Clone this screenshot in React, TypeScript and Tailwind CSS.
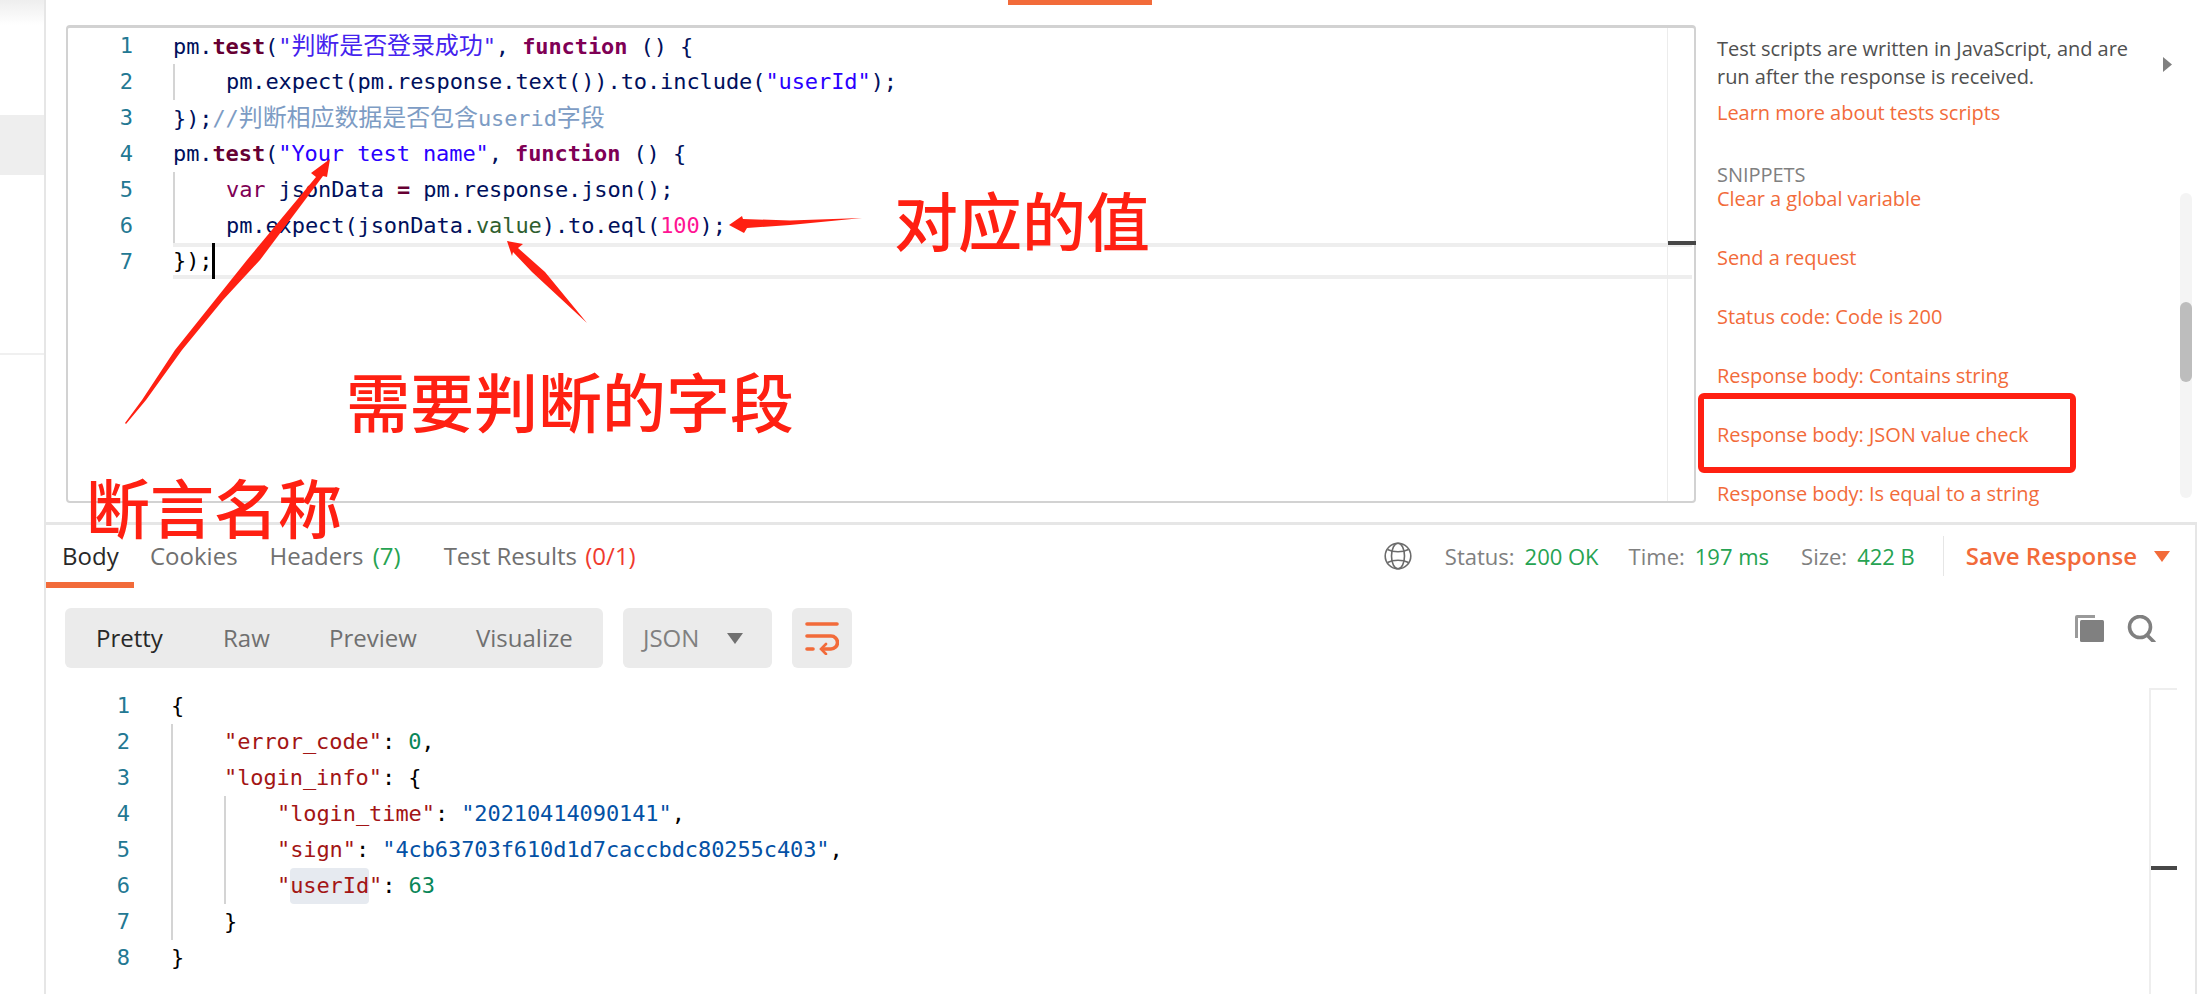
import type { ReactNode } from "react";

const UI_FONT = "font-['Open_Sans','Noto_Sans_CJK_SC',sans-serif]";
const CODE_FONT = "font-['DejaVu_Sans_Mono','Noto_Sans_CJK_SC',monospace] tracking-[-0.09px]";
const ANNOTATION =
  "absolute font-['Noto_Sans_CJK_SC',sans-serif] font-medium text-[64px] leading-[64px] text-[#ff2012] whitespace-nowrap";

function Cjk({ children, className = "" }: { children: ReactNode; className?: string }) {
  return <span className={`text-[24px] leading-[36px] ${className}`}>{children}</span>;
}

// one row of an editor: gutter number, indent guides, then the code
function CodeLine({
  n,
  levels = 0,
  gutter,
  children,
  active = false,
}: {
  n: number;
  levels?: number;
  gutter: string;
  children: ReactNode;
  active?: boolean;
}) {
  return (
    <div className="flex h-[36px]">
      <div className={`${gutter} shrink-0 text-right text-[#237893] leading-[36px]`}>{n}</div>
      {Array.from({ length: levels }).map((_, i) => (
        <div key={i} className="w-[53px] h-[36px] shrink-0 border-l-2 border-[#d4d4d4]" />
      ))}
      {active ? (
        <div className="w-[1519px] h-[36px] -mt-px border-y-4 border-[#eeeeee] leading-[28px] flex shrink-0">
          {children}
        </div>
      ) : (
        <div className="leading-[36px] whitespace-pre text-[#00105c]">{children}</div>
      )}
    </div>
  );
}

function Snippet({ children }: { children: ReactNode }) {
  return <div className="h-[24px] mb-[35px] leading-[24px] text-[#f26b3a] whitespace-nowrap">{children}</div>;
}

function Annotations() {
  return (
    <>
      <svg className="absolute inset-0 pointer-events-none" width="2197" height="994" viewBox="0 0 2197 994">
        <polygon
          points="125,423 142,400 175,350 215,300 247,260 316,177 311,173 330,159 327,177 323,176 260,260 223,300 182,350 146,400 126,424"
          fill="#ff2012"
        />
        <polygon points="862,218 790,220.5 743,219 742,216 729,225 744,233 747,228 790,225" fill="#ff2012" />
        <polygon points="587,323 545,272 518,248 523,244 507,241 512,256 513,252 532,272" fill="#ff2012" />
      </svg>
      <div className={`${ANNOTATION} left-[894px] top-[186px]`}>对应的值</div>
      <div className={`${ANNOTATION} left-[346px] top-[367px]`}>需要判断的字段</div>
      <div className={`${ANNOTATION} left-[86px] top-[473px]`}>断言名称</div>
      <div className="absolute left-[1698px] top-[393px] w-[378px] h-[80px] border-[6px] border-[#ff2012] rounded-[6px]" />
    </>
  );
}

export default function App() {
  const topGutter = "w-[105px] pr-[40px]";
  const jsonGutter = "w-[125px] pr-[41px]";
  return (
    <div className={`relative flex w-[2197px] h-[994px] overflow-hidden bg-white ${UI_FONT}`}>
      {/* Left sidebar */}
      <div className="w-[46px] shrink-0 border-r-2 border-[#e6e6e6]">
        <div className="h-[25px] bg-gradient-to-b from-[#eeeeee] to-white" />
        <div className="h-[60px] mt-[90px] bg-[#eeeeee]" />
        <div className="h-[2px] mt-[178px] bg-[#f0f0f0]" />
      </div>

      <div className="flex-1 min-w-0 flex flex-col">
        {/* Tests pane */}
        <div className="h-[522px] shrink-0">
          <div className="h-[5px] w-[144px] ml-[962px] bg-[#f26b3a]" />
          <div className="flex mt-[20px]">
            <div
              className={`ml-[20px] w-[1630px] h-[478px] shrink-0 flex border-2 border-t-[3px] border-[#d2d2d2] border-b-[2px] rounded-[4px] text-[22px] ${CODE_FONT}`}
            >
              <div className="w-[1599px] shrink-0">
                <CodeLine n={1} gutter={topGutter}>
                  pm.<b className="text-[#660033]">test</b>(<span className="text-[#4422ee]">"<Cjk>判断是否登录成功</Cjk>"</span>, <b className="text-[#7f0055]">function</b> () {"{"}
                </CodeLine>
                <CodeLine n={2} levels={1} gutter={topGutter}>
                  pm.expect(pm.response.text()).to.include(<span className="text-[#2a00ff]">"userId"</span>);
                </CodeLine>
                <CodeLine n={3} gutter={topGutter}>
                  {"});"}
                  <span className="text-[#7d9cc4]">
                    //<Cjk>判断相应数据是否包含</Cjk>userid<Cjk>字段</Cjk>
                  </span>
                </CodeLine>
                <CodeLine n={4} gutter={topGutter}>
                  pm.<b className="text-[#660033]">test</b>(<span className="text-[#2a00ff]">"Your test name"</span>, <b className="text-[#7f0055]">function</b> () {"{"}
                </CodeLine>
                <CodeLine n={5} levels={1} gutter={topGutter}>
                  <span className="text-[#7f0055]">var</span> jsonData <b className="text-[#660033]">=</b> pm.response.json();
                </CodeLine>
                <CodeLine n={6} levels={1} gutter={topGutter}>
                  pm.expect(jsonData.<span className="text-[#2f5f2f]">value</span>).to.eql(<span className="text-[#ff1493]">100</span>);
                </CodeLine>
                <CodeLine n={7} gutter={topGutter} active>
                  <span className="whitespace-pre text-black">{"});"}</span>
                  <span className="w-[3px] h-[36px] -mt-[4px] bg-black" />
                </CodeLine>
              </div>
              <div className="w-[29px] shrink-0 border-l border-[#ececec]">
                <div className="h-[4px] mt-[213px] bg-[#474747]" />
              </div>
            </div>

            {/* Snippets */}
            <div className="h-[483px] flex-1 min-w-0 flex overflow-hidden text-[20px] tracking-[-0.04px] pl-[21px]">
              <div className="w-[446px] shrink-0 pt-[10px]">
                <div className="w-[425px] leading-[28px] text-[#505050]">
                  Test scripts are written in JavaScript, and are run after the response is received.
                </div>
                <div className="mt-[8px] leading-[28px] text-[#f26b3a]">Learn more about tests scripts</div>
                <div className="mt-[36px] h-[24px] leading-[24px] text-[#808080]">SNIPPETS</div>
                <Snippet>Clear a global variable</Snippet>
                <Snippet>Send a request</Snippet>
                <Snippet>Status code: Code is 200</Snippet>
                <Snippet>Response body: Contains string</Snippet>
                <Snippet>Response body: JSON value check</Snippet>
                <Snippet>Response body: Is equal to a string</Snippet>
              </div>
              <svg className="mt-[32px] shrink-0" width="9" height="15" viewBox="0 0 9 15">
                <polygon points="0,0 9,7.5 0,15" fill="#808080" />
              </svg>
              <div className="ml-[8px] mt-[168px] w-[12px] h-[305px] shrink-0 rounded-full bg-[#f4f4f4] pt-[109px]">
                <div className="h-[80px] rounded-full bg-[#bdbdbd]" />
              </div>
            </div>
          </div>
        </div>

        {/* Response pane */}
        <div className="flex-1 min-h-0 flex flex-col border-t-[3px] border-r-2 border-[#e6e6e6]">
          <div className="flex h-[63px] shrink-0 text-[24px] text-[#707070]">
            <div className="w-[88px] h-[63px] border-b-[6px] border-[#f26b3a] pl-[16px] leading-[62px] text-[#282828]">Body</div>
            <div className="ml-[16px] leading-[62px]">Cookies</div>
            <div className="ml-[32px] leading-[62px]">
              Headers <span className="ml-[3px] text-[#26a352]">(7)</span>
            </div>
            <div className="ml-[43px] leading-[62px]">
              Test Results <span className="ml-[2px] text-[#f03a2e]">(0/1)</span>
            </div>
            <div className="ml-auto flex h-[62px] items-center text-[22px] pr-[25px]">
              <svg width="28" height="28" viewBox="0 0 28 28" fill="none" stroke="#6b6b6b" strokeWidth="1.6">
                <circle cx="14" cy="14" r="12.8" />
                <ellipse cx="14" cy="14" rx="6.5" ry="12.8" />
                <path d="M3.5 7.5c6 3 15 3 21 0M3.5 20.5c6-3 15-3 21 0" />
              </svg>
              <span className="ml-[33px] text-[#808080]">Status:</span>
              <span className="ml-[10px] text-[#26a352]">200 OK</span>
              <span className="ml-[30px] text-[#808080]">Time:</span>
              <span className="ml-[10px] text-[#26a352]">197 ms</span>
              <span className="ml-[32px] text-[#808080]">Size:</span>
              <span className="ml-[10px] text-[#26a352]">422 B</span>
              <div className="ml-[28px] w-px h-[40px] bg-[#e6e6e6]" />
              <span className="ml-[22px] text-[24px] font-semibold text-[#f26b3a]">Save Response</span>
              <svg className="ml-[17px]" width="16" height="11" viewBox="0 0 16 11">
                <polygon points="0,0 16,0 8,11" fill="#f26b3a" />
              </svg>
            </div>
          </div>

          <div className="flex mt-[20px] shrink-0 text-[24px] text-[#707070] pl-[19px] pr-[39px]">
            <div className="flex w-[538px] h-[60px] pl-[31px] rounded-[6px] bg-[#ebebeb] leading-[60px]">
              <div className="w-[127px] text-[#282828]">Pretty</div>
              <div className="w-[106px]">Raw</div>
              <div className="w-[147px]">Preview</div>
              <div>Visualize</div>
            </div>
            <div className="ml-[20px] flex items-center w-[149px] h-[60px] pl-[20px] rounded-[6px] bg-[#ebebeb] text-[#808080]">
              JSON
              <svg className="ml-[28px]" width="16" height="11" viewBox="0 0 16 11">
                <polygon points="0,0 16,0 8,11" fill="#707070" />
              </svg>
            </div>
            <div className="ml-[20px] flex items-center justify-center w-[60px] h-[60px] rounded-[6px] bg-[#ebebeb]">
              <svg width="34" height="34" viewBox="0 0 34 34" fill="none" stroke="#f26b3a" strokeWidth="3.6" strokeLinecap="round">
                <path d="M2 3h30" />
                <path d="M2 15h24a6 6 0 0 1 0 13h-8" />
                <path d="M2 28h6" />
                <path d="M21 23l-5 5 5 5" strokeWidth="2.6" />
              </svg>
            </div>
            <div className="ml-auto flex items-center gap-[23px] h-[60px] -mt-[10px]">
              <svg width="29" height="27" viewBox="0 0 29 27">
                <path d="M0 2a2 2 0 0 1 2-2h18v3H3v20H0z" fill="#9a9a9a" />
                <rect x="5" y="5" width="24" height="22" rx="1.5" fill="#808080" />
              </svg>
              <svg width="29" height="27" viewBox="0 0 29 27" fill="none" stroke="#808080" strokeWidth="3.6">
                <circle cx="13" cy="12" r="10.5" />
                <path d="M20 20l7 7" strokeLinecap="round" />
              </svg>
            </div>
          </div>

          <div className={`flex flex-1 min-h-0 mt-[20px] text-[22px] ${CODE_FONT}`}>
            <div className="flex-1 min-w-0">
              <CodeLine n={1} gutter={jsonGutter}>
                <span className="text-black">{"{"}</span>
              </CodeLine>
              <CodeLine n={2} levels={1} gutter={jsonGutter}>
                <span className="text-[#a31515]">"error_code"</span>
                <span className="text-black">: </span>
                <span className="text-[#098658]">0</span>
                <span className="text-black">,</span>
              </CodeLine>
              <CodeLine n={3} levels={1} gutter={jsonGutter}>
                <span className="text-[#a31515]">"login_info"</span>
                <span className="text-black">: {"{"}</span>
              </CodeLine>
              <CodeLine n={4} levels={2} gutter={jsonGutter}>
                <span className="text-[#a31515]">"login_time"</span>
                <span className="text-black">: </span>
                <span className="text-[#0451a5]">"20210414090141"</span>
                <span className="text-black">,</span>
              </CodeLine>
              <CodeLine n={5} levels={2} gutter={jsonGutter}>
                <span className="text-[#a31515]">"sign"</span>
                <span className="text-black">: </span>
                <span className="text-[#0451a5]">"4cb63703f610d1d7caccbdc80255c403"</span>
                <span className="text-black">,</span>
              </CodeLine>
              <CodeLine n={6} levels={2} gutter={jsonGutter}>
                <span className="text-[#a31515]">
                  "<span className="inline-block h-[36px] rounded-[4px] bg-[#e6eaf0]">userId</span>"
                </span>
                <span className="text-black">: </span>
                <span className="text-[#098658]">63</span>
              </CodeLine>
              <CodeLine n={7} levels={1} gutter={jsonGutter}>
                <span className="text-black">{"}"}</span>
              </CodeLine>
              <CodeLine n={8} gutter={jsonGutter}>
                <span className="text-black">{"}"}</span>
              </CodeLine>
            </div>
            <div className="w-[28px] mr-[18px] shrink-0 border-l-2 border-t-2 border-[#eeeeee]">
              <div className="h-[4px] mt-[176px] bg-[#474747]" />
            </div>
          </div>
        </div>
      </div>

      <Annotations />
    </div>
  );
}
